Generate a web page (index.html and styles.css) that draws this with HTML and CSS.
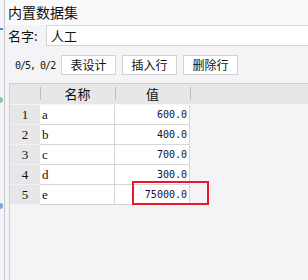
FILE: index.html
```html
<!DOCTYPE html>
<html>
<head>
<meta charset="utf-8">
<link rel="stylesheet" href="styles.css">
</head>
<body>
<div class="strip">
  <div class="mark mark-blue1"></div>
  <div class="mark mark-green"></div>
  <div class="mark mark-blue2"></div>
</div>
<div class="dialog">
  <div class="title">内置数据集</div>
  <div class="name-row">
    <span class="label">名字:</span>
    <div class="input">人工</div>
  </div>
  <div class="toolbar">
    <span class="count">0/5, 0/2</span>
    <button class="btn">表设计</button>
    <button class="btn">插入行</button>
    <button class="btn">删除行</button>
  </div>
  <div class="grid-wrap">
    <div class="head">
      <div class="hcell hnum"></div>
      <div class="hcell hname">名称</div>
      <div class="hcell hval">值</div>
      <div class="hcell hrest"></div>
    </div>
    <div class="row"><div class="num">1</div><div class="name">a</div><div class="val">600.0</div></div>
    <div class="row"><div class="num">2</div><div class="name">b</div><div class="val">400.0</div></div>
    <div class="row"><div class="num">3</div><div class="name">c</div><div class="val">700.0</div></div>
    <div class="row"><div class="num">4</div><div class="name">d</div><div class="val">300.0</div></div>
    <div class="row"><div class="num">5</div><div class="name">e</div><div class="val hl">75000.0<span class="redbox"></span></div></div>
  </div>
</div>
</body>
</html>
```
FILE: styles.css
```css
html, body {
  margin: 0;
  padding: 0;
}
body {
  width: 308px;
  height: 280px;
  overflow: hidden;
  display: flex;
  background: #f3f5f8;
  font-family: "Noto Sans CJK SC", "Noto Sans", sans-serif;
  color: #111;
}
.strip {
  width: 4px;
  border-right: 1px solid #c3c7ce;
  background: #f3f5f8;
  display: flex;
  flex-direction: column;
  flex: none;
}
.mark { width: 3px; }
.mark-blue1 { height: 2px; margin-top: 28px; background: #4a8ad8; }
.mark-green { height: 6px; margin-top: 67px; background: #8cc8a0; border-radius: 0 3px 3px 0; }
.mark-blue2 { height: 6px; margin-top: 100px; background: #7aa6d8; border-radius: 0 3px 3px 0; }
.dialog {
  flex: 1;
  display: flex;
  flex-direction: column;
  background: #f4f4f7;
  min-width: 0;
  overflow: hidden;
}
.title {
  height: 25px;
  line-height: 24px;
  padding-left: 3px;
  font-size: 14px;
  background: #fafafc;
}
.name-row {
  display: flex;
  align-items: center;
  height: 21px;
}
.label {
  width: 38px;
  padding-left: 3px;
  font-size: 13px;
  line-height: 21px;
}
.input {
  flex: 1;
  height: 19px;
  border: 1px solid #d6d6d9;
  border-right: none;
  background: #fff;
  font-size: 13px;
  line-height: 19px;
  padding-left: 4px;
}
.toolbar {
  display: flex;
  align-items: center;
  gap: 6px;
  margin-top: 9px;
  height: 20px;
  padding-left: 10px;
}
.count {
  font-family: "DejaVu Sans Mono", monospace;
  font-size: 10px;
  width: 40px;
  white-space: nowrap;
  letter-spacing: -1px;
  color: #111;
}
.btn {
  width: 55px;
  height: 20px;
  padding: 0;
  margin: 0;
  border: 1px solid #d2d2d6;
  background: #fff;
  font-family: "Noto Sans CJK SC", sans-serif;
  font-size: 12px;
  line-height: 18px;
  color: #111;
}
.grid-wrap {
  flex: 1;
  margin-top: 8px;
  margin-left: 4px;
  border-top: 1px solid #cfcfd2;
  border-left: 1px solid #cfcfd2;
  background: #f4f4f7;
}
.head {
  display: flex;
  height: 20px;
  background: #e7e7e9;
  border-bottom: 1px solid #f6f6f6;
}
.hcell {
  font-size: 13px;
  line-height: 20px;
  text-align: center;
  position: relative;
}
.hnum { width: 30px; }
.hname { width: 75px; }
.hval { width: 75px; }
.hrest { flex: 1; }
.hnum::after, .hname::after, .hval::after {
  content: "";
  position: absolute;
  right: -1px;
  top: 3px;
  height: 13px;
  border-right: 1px solid #bdbdbd;
}
.row {
  display: flex;
  height: 20px;
}
.num {
  width: 30px;
  background: #e7e7e9;
  border-bottom: 1px solid #f2f2f2;
  box-sizing: border-box;
  text-align: center;
  font-family: "Liberation Serif", serif;
  font-size: 13px;
  line-height: 19px;
}
.name, .val {
  width: 75px;
  box-sizing: border-box;
  background: #fff;
  border-bottom: 1px solid #d6d6d8;
  border-right: 1px solid #d6d6d8;
  font-size: 12px;
  line-height: 19px;
}
.name {
  padding-left: 2px;
  font-family: "Liberation Serif", serif;
  font-size: 13px;
}
.val {
  text-align: right;
  padding-right: 2px;
  font-family: "DejaVu Sans Mono", monospace;
  font-size: 10px;
  color: #101030;
}
.hl { position: relative; }
.redbox {
  position: absolute;
  left: 17px;
  top: -4px;
  width: 77px;
  height: 24px;
  box-sizing: border-box;
  border: 2px solid #e8192c;
}
```
